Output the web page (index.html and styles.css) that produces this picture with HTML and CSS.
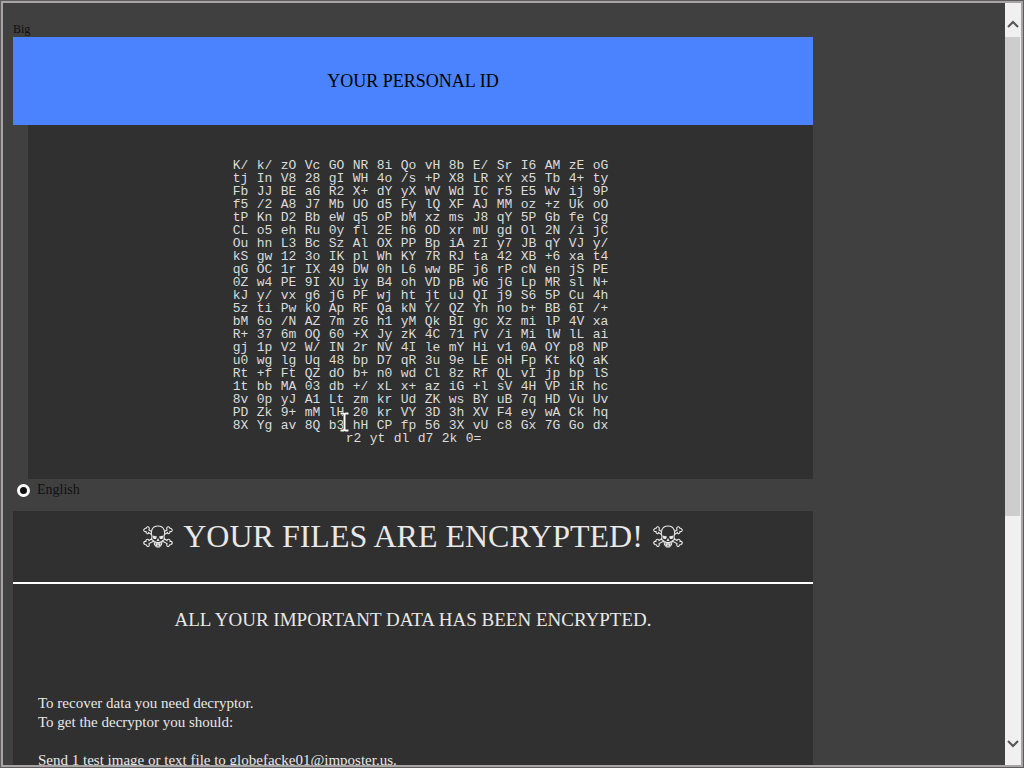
FILE: index.html
```
<!DOCTYPE html>
<html lang="en">
<head>
    <meta charset="UTF-8">
    <meta name="viewport" content="width=device-width, initial-scale=1.0">
    <title>Your personal ID</title>
    <link rel="stylesheet" href="styles.css">
</head>
<body>
    <div class="window">
        <div class="viewport">
            <div class="page">
                <div class="tiny">Big</div>
                <div class="header">YOUR PERSONAL ID</div>
                <div class="id-box">
<pre class="key">K/	k/	zO	Vc	GO	NR	8i	Qo	vH	8b	E/	Sr	I6	AM	zE	oG
tj	In	V8	28	gI	WH	4o	/s	+P	X8	LR	xY	x5	Tb	4+	ty
Fb	JJ	BE	aG	R2	X+	dY	yX	WV	Wd	IC	r5	E5	Wv	ij	9P
f5	/2	A8	J7	Mb	UO	d5	Fy	lQ	XF	AJ	MM	oz	+z	Uk	oO
tP	Kn	D2	Bb	eW	q5	oP	bM	xz	ms	J8	qY	5P	Gb	fe	Cg
CL	o5	eh	Ru	0y	fl	2E	h6	OD	xr	mU	gd	Ol	2N	/i	jC
Ou	hn	L3	Bc	Sz	Al	OX	PP	Bp	iA	zI	y7	JB	qY	VJ	y/
kS	gw	12	3o	IK	pl	Wh	KY	7R	RJ	ta	42	XB	+6	xa	t4
qG	OC	1r	IX	49	DW	0h	L6	ww	BF	j6	rP	cN	en	jS	PE
0Z	w4	PE	9I	XU	iy	B4	oh	VD	pB	wG	jG	Lp	MR	sl	N+
kJ	y/	vx	g6	jG	PF	wj	ht	jt	uJ	QI	j9	S6	5P	Cu	4h
5z	ti	Pw	kO	Ap	RF	Qa	kN	Y/	QZ	Yh	no	b+	BB	6I	/+
bM	6o	/N	AZ	7m	zG	h1	yM	Qk	BI	gc	Xz	mi	lP	4V	xa
R+	37	6m	OQ	60	+X	Jy	zK	4C	71	rV	/i	Mi	lW	lL	ai
gj	1p	V2	W/	IN	2r	NV	4I	le	mY	Hi	v1	0A	OY	p8	NP
u0	wg	lg	Uq	48	bp	D7	qR	3u	9e	LE	oH	Fp	Kt	kQ	aK
Rt	+f	Ft	QZ	dO	b+	n0	wd	Cl	8z	Rf	QL	vI	jp	bp	lS
1t	bb	MA	03	db	+/	xL	x+	az	iG	+l	sV	4H	VP	iR	hc
8v	0p	yJ	A1	Lt	zm	kr	Ud	ZK	ws	BY	uB	7q	HD	Vu	Uv
PD	Zk	9+	mM	lH	20	kr	VY	3D	3h	XV	F4	ey	wA	Ck	hq
8X	Yg	av	8Q	b3	hH	CP	fp	56	3X	vU	c8	Gx	7G	Go	dx</pre>
<pre class="key key-end">r2	yt	dl	d7	2k	0=</pre>
                </div>
                <div class="language">
                    <input type="radio" name="lang" id="en" checked>
                    <label for="en">English</label>
                </div>
                <div class="note">
                    <h1>
                        <svg class="skull" viewBox="0 0 30 23"><use href="#skull"/></svg>
                        YOUR FILES ARE ENCRYPTED!
                        <svg class="skull" viewBox="0 0 30 23"><use href="#skull"/></svg>
                    </h1>
                    <hr>
                    <h2>ALL YOUR IMPORTANT DATA HAS BEEN ENCRYPTED.</h2>
                    <div class="text">
                        To recover data you need decryptor.<br>
                        To get the decryptor you should:<br>
                        <br>
                        Send 1 test image or text file to globefacke01@imposter.us.
                    </div>
                </div>
            </div>
        </div>
        <div class="scrollbar">
            <button class="arrow" aria-label="Scroll up">
                <svg width="12" height="8" viewBox="0 0 12 8"><path d="M1 7 L6 2 L11 7"/></svg>
            </button>
            <div class="track"><div class="thumb"></div></div>
            <button class="arrow" aria-label="Scroll down">
                <svg width="12" height="8" viewBox="0 0 12 8"><path d="M1 1 L6 6 L11 1"/></svg>
            </button>
        </div>
    </div>

    <!-- mouse pointer -->
    <svg class="cursor" width="11" height="20" viewBox="0 0 11 20">
        <path class="edge" d="M1.5 1.5h3l1 1 1-1h3M5.5 2v16M1.5 18.5h3l1-1 1 1h3"/>
        <path class="beam" d="M1.5 1.5h3l1 1 1-1h3M5.5 2v16M1.5 18.5h3l1-1 1 1h3"/>
    </svg>

    <svg class="defs" width="0" height="0">
        <symbol id="skull" viewBox="0 0 30 23">
            <g fill="none" stroke="#e8e8e8" stroke-width="1.1">
                <path d="M9 12C7.500 8 8 1 15 1S22.500 8 21 12L21.500 14.500 19 16 18.500 19.500 16.500 22H13.500L11.500 19.500 11 16 8.500 14.500Z"/>
                <path d="M11.500 16.500C13 18 17 18 18.500 16.500M12 19H18M13.500 17.500V21M15 17.500V22M16.500 17.500V21"/>
                <path d="M8.500 6.500L6 5C7 2.500 5 .5 3.500 2.500 3.500 3.500 2.500 3.500 2 3.500 0 4.500 .5 7 3 6.500 3 9 5.500 9.500 5.500 7.500L8.500 9.500"/>
                <path d="M21.500 6.500L24 5C23 2.500 25 .5 26.500 2.500 26.500 3.500 27.500 3.500 28 3.500 30 4.500 29.500 7 27 6.500 27 9 24.500 9.500 24.500 7.500L21.500 9.500"/>
                <path d="M9 13.500L6 15.500C5.500 13.500 2.500 14 3 16.500 .5 16 0 18.500 2 19.500L3.500 20C4 22.500 7 22 6 18.500L11 16"/>
                <path d="M21 13.500L24 15.500C24.500 13.500 27.500 14 27 16.500 29.500 16 30 18.500 28 19.500L26.500 20C26 22.500 23 22 24 18.500L19 16"/>
            </g>
            <path fill="#e8e8e8" d="M9.500 10.500L14 11.500 13 14H10.500ZM20.500 10.500L16 11.500 17 14H19.500ZM15 13L16.500 16H13.500Z"/>
        </symbol>
    </svg>
</body>
</html>
```
FILE: styles.css
```
* {
    box-sizing: border-box;
}
body {
    margin: 0;
    background-color: #404040;
    font-family: "Liberation Serif", "Times New Roman", serif;
    color: #000;
}
.window {
    display: flex;
    height: 100vh;
    overflow: hidden;
    border: 1px solid #5c5c5c;
    outline: 2px solid #a8a4a6;
    outline-offset: -3px;
    padding: 2px;
}
.viewport {
    flex: 1;
    min-width: 0;
    overflow: hidden;
    padding: 18px 10px;
}
.page {
    max-width: 800px;
}
.tiny {
    height: 16px;
    font-size: 12px;
    line-height: 16px;
    color: #111;
}
.header {
    background-color: #4a83fd;
    font-size: 18px;
    line-height: 24px;
    padding: 32px 0;
    text-align: center;
}
.id-box {
    margin-left: 15px;
    padding: 34px 0;
    background-color: #303030;
}
.key {
    width: fit-content;
    margin: 0 auto;
    font-family: "Liberation Mono", "Courier New", monospace;
    font-size: 13px;
    line-height: 13px;
    tab-size: 24px;
    color: #dcdcdc;
}
.key-end {
    padding-right: 14px;
}
.language {
    display: flex;
    align-items: center;
    gap: 7px;
    height: 22px;
    padding-left: 4px;
    margin-bottom: 10px;
    font-size: 14px;
    color: #111;
}
.language input {
    appearance: none;
    width: 13px;
    height: 13px;
    margin: 0;
    border: 3px solid #fff;
    border-radius: 50%;
    background-color: #111;
}
.note {
    background-color: #303030;
    color: #e8e8e8;
}
h1 {
    display: flex;
    justify-content: center;
    align-items: center;
    gap: 10px;
    margin: 0;
    height: 71px;
    padding-bottom: 20px;
    font-size: 32px;
    font-weight: normal;
}
.skull {
    width: 30px;
    height: 23px;
}
hr {
    margin: 0;
    border: 0;
    border-top: 2px solid #fff;
}
h2 {
    margin: 0;
    padding: 24px 0;
    font-size: 19px;
    line-height: 24px;
    font-weight: normal;
    text-align: center;
}
.text {
    padding: 38px 25px;
    font-size: 15px;
    line-height: 19px;
}
.scrollbar {
    display: flex;
    flex-direction: column;
    width: 16px;
    background-color: #f0f0f0;
}
.arrow {
    display: flex;
    justify-content: center;
    align-items: center;
    height: 34px;
    padding: 8px 0 0;
    border: 0;
    background-color: #f0f0f0;
}
.arrow:last-child {
    padding: 0 0 8px;
}
.arrow path {
    fill: none;
    stroke: #555;
    stroke-width: 2;
}
.track {
    flex: 1;
}
.thumb {
    height: 69%;
    margin-right: 1px;
    background-color: #cdcdcd;
}
.cursor {
    position: absolute;
    left: 339px;
    top: 412px;
    fill: none;
}
.cursor .edge {
    stroke: #222;
    stroke-width: 3;
}
.cursor .beam {
    stroke: #fff;
    stroke-width: 2;
}
.defs {
    position: absolute;
}
```
